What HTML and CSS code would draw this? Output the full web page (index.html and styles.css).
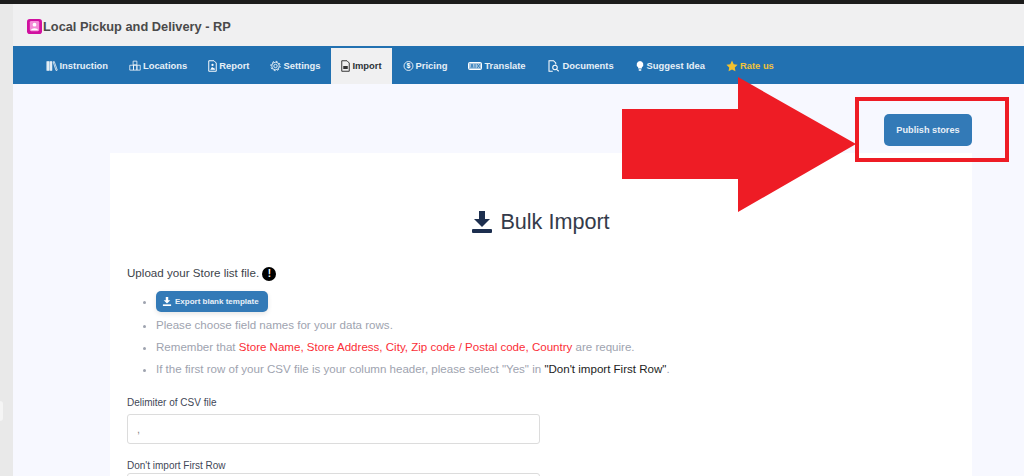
FILE: index.html
```html
<!DOCTYPE html>
<html lang="en">
<head>
    <meta charset="UTF-8">
    <meta name="viewport" content="width=device-width, initial-scale=1.0">
    <title>Local Pickup and Delivery - RP</title>
    <link rel="stylesheet" href="styles.css">
</head>
<body>
    <div class="topbar"></div>
    <div class="wrap">
        <div class="sidebar"><div class="sidebar-tab"></div></div>
        <div class="page">
            <div class="app-title">
                <svg class="app-logo" viewBox="0 0 16 16"><rect width="16" height="16" rx="3" fill="#d0109f"/><rect x="3" y="2" width="10" height="11" rx="1.5" fill="#f48ad8"/><circle cx="8" cy="6" r="2" fill="#fff"/><path d="M4 12c1-3 7-3 8 0z" fill="#fff"/></svg>
                <span>Local Pickup and Delivery - RP</span>
            </div>

            <nav class="nav">
                <a class="nav-item" href="#">
                    <svg class="ico ico-12" viewBox="0 0 16 16"><path d="M1 2h3v12H1zM5 2h3v12H5z" fill="#fff" fill-opacity=".85" stroke="#fff" stroke-width=".6"/><path d="M9.500 2.500l1.500-.5 4 11.500-1.600.6z" fill="none" stroke="#fff"/></svg>Instruction</a>
                <a class="nav-item" href="#">
                    <svg class="ico ico-12" viewBox="0 0 16 16"><path d="M5.500 1.500h5v5h-5zM1 7h5v6.500H1zM6 7h4.500v6.500H6zM10.500 7H15v6.500h-4.500z" fill="none" stroke="#fff"/></svg>Locations</a>
                <a class="nav-item" href="#">
                    <svg class="ico ico-9" viewBox="0 0 12 16"><path d="M1 1h7l3 3v11H1z" fill="none" stroke="#fff" stroke-width="1.300"/><circle cx="6" cy="6.500" r="1.500" fill="#fff"/><path d="M3 13l2.500-4 1.500 2 1-1 1.500 3z" fill="#fff"/></svg>Report</a>
                <a class="nav-item" href="#">
                    <svg class="ico ico-11" viewBox="0 0 16 16"><circle cx="8" cy="8" r="2.500" fill="none" stroke="#fff" stroke-width="1.200"/><circle cx="8" cy="8" r="5.500" fill="none" stroke="#fff" stroke-width="1.200"/><circle cx="8" cy="8" r="6.800" fill="none" stroke="#fff" stroke-width="1.400" stroke-dasharray="2.400 2.900"/></svg>Settings</a>
                <a class="nav-item active" href="#">
                    <svg class="ico ico-9" viewBox="0 0 12 16"><path d="M1 1h7l3 3v11H1z" fill="none" stroke="#333" stroke-width="1.300"/><path d="M3 8h6v4H3z" fill="#333"/></svg>Import</a>
                <a class="nav-item" href="#">
                    <svg class="ico ico-11" viewBox="0 0 16 16"><circle cx="8" cy="8" r="6.500" fill="none" stroke="#fff" stroke-width="1.200"/><text class="ico-text" x="8" y="11.500" text-anchor="middle">$</text></svg>Pricing</a>
                <a class="nav-item" href="#">
                    <svg class="ico ico-14" viewBox="0 0 14 8"><rect x=".5" y=".5" width="13" height="7" rx="1" fill="#fff" fill-opacity=".6" stroke="#fff"/><path d="M3 6l1-4 1 4M7 2v4M9 2l3 4M12 2L9 6" fill="none" stroke="#1f72b5" stroke-width=".8"/></svg>Translate</a>
                <a class="nav-item nav-docs" href="#">
                    <svg class="ico ico-13" viewBox="0 0 16 16"><path d="M7 15H2V1h6l3 3v2" fill="none" stroke="#fff" stroke-width="1.400"/><circle cx="10" cy="10" r="3" fill="none" stroke="#fff" stroke-width="1.400"/><path d="M12 12.500l3 2.500" stroke="#fff" stroke-width="1.400"/></svg>Documents</a>
                <a class="nav-item" href="#">
                    <svg class="ico ico-10" viewBox="0 0 16 16"><path d="M8 0a5.500 5.500 0 0 0-3 10v2h6v-2a5.500 5.500 0 0 0-3-10zM6 13h4v2.500H6z" fill="#fff"/></svg>Suggest Idea</a>
                <a class="nav-item rate" href="#">
                    <svg class="ico ico-12" viewBox="0 0 16 16"><path d="M8 .8l2.300 4.800 5.200.7-3.800 3.600.9 5.200L8 12.600l-4.600 2.500.9-5.200L.5 6.300l5.200-.7z" fill="#f2c12e"/></svg>Rate us</a>
            </nav>

            <main class="content">
                <div class="actions">
                    <button class="btn btn-publish">Publish stores</button>
                </div>

                <section class="card">
                    <h1 class="card-title">
                        <svg class="title-ico" viewBox="0 0 20 22"><path d="M7 0h6v8h5l-8 8-8-8h5z" fill="#1d2f4f"/><rect y="18" width="20" height="4" rx="1" fill="#1d2f4f"/></svg>
                        Bulk Import
                    </h1>

                    <p class="lead">Upload your Store list file. <span class="info-dot">!</span></p>
                    <ul class="steps">
                        <li class="step-btn"><button class="btn btn-export"><svg class="export-ico" viewBox="0 0 20 22"><path d="M7 0h6v8h5l-8 8-8-8h5z" fill="#fff"/><rect y="18" width="20" height="4" fill="#fff"/></svg>Export blank template</button></li>
                        <li>Please choose field names for your data rows.</li>
                        <li>Remember that <span class="req">Store Name, Store Address, City, Zip code / Postal code, Country</span> are require.</li>
                        <li>If the first row of your CSV file is your column header, please select "Yes" in <span class="dark">"Don't import First Row"</span>.</li>
                    </ul>

                    <label class="field-label" for="delimiter">Delimiter of CSV file</label>
                    <input class="field" id="delimiter" type="text" value=",">

                    <label class="field-label field-label-tight" for="first-row">Don't import First Row</label>
                    <input class="field" id="first-row" type="text">
                </section>
            </main>
        </div>
    </div>

    <!-- annotation drawn over the screenshot -->
    <svg class="arrow" viewBox="0 0 234 136"><path d="M0 32h116V0l118 67-118 68V102H0z" fill="#ee1c25"/></svg>
    <div class="red-box"></div>
</body>
</html>
```

FILE: styles.css
```css
* {
    box-sizing: border-box;
}

html, body {
    height: 100%;
}

body {
    margin: 0;
    font-family: "Liberation Sans", Arial, sans-serif;
    background: #f0f0f1;
    color: #3c434a;
    overflow: hidden;
}

.topbar {
    height: 4px;
    background: #1c1c1c;
}

.wrap {
    display: flex;
    height: 472px;
    overflow: hidden;
}

.sidebar {
    width: 13px;
    background: #e9e9e9;
    padding-top: 397px;
}

.sidebar-tab {
    width: 3px;
    height: 20px;
    background: #f5f5f5;
    border-radius: 0 3px 3px 0;
}

.page {
    flex: 1;
    min-width: 0;
    display: flex;
    flex-direction: column;
}

.app-title {
    height: 42px;
    display: flex;
    align-items: center;
    gap: 1px;
    padding: 3px 0 0 14px;
    font-size: 12.800px;
    font-weight: bold;
    color: #4a4a4a;
}

.app-logo {
    width: 15px;
    height: 15px;
}

.nav {
    height: 38px;
    background: #2271b1;
    display: flex;
    align-items: center;
    padding-left: 22px;
}

.nav-item {
    height: 36px;
    margin-top: 1px;
    padding: 0 10.500px;
    display: flex;
    align-items: center;
    gap: 2px;
    font-size: 9.400px;
    font-weight: bold;
    color: #e6eff7;
    text-decoration: none;
}

.nav-item.active {
    background: #f0f0f1;
    color: #2c3338;
}

.nav-item.rate {
    color: #f0c33c;
}

.nav-docs {
    gap: 3px;
}

.ico {
    height: 12px;
}

.ico-9 {
    width: 9px;
}

.ico-10 {
    width: 10px;
}

.ico-11 {
    width: 11px;
}

.ico-12 {
    width: 12px;
}

.ico-13 {
    width: 13px;
}

.ico-14 {
    width: 14px;
    height: 8px;
}

.ico-text {
    font-size: 10px;
    font-weight: bold;
    fill: #fff;
}

.content {
    flex: 1;
    background: #f7f8ff;
    min-height: 0;
}

.actions {
    height: 69px;
    display: flex;
    justify-content: flex-end;
    padding: 30px 52px 0 0;
}

.btn {
    border: none;
    background: #337ab7;
    color: #e8f0f7;
    font-family: inherit;
    font-weight: bold;
    border-radius: 5px;
}

.btn-publish {
    width: 88px;
    height: 32px;
    font-size: 9.200px;
}

.card {
    width: 862px;
    height: 400px;
    margin-left: 97px;
    background: #fff;
    padding: 52px 17px 0;
}

.card-title {
    margin: 0 0 26px;
    display: flex;
    justify-content: center;
    align-items: center;
    gap: 8px;
    font-size: 21.600px;
    font-weight: normal;
    line-height: 34px;
    color: #343b4a;
}

.title-ico {
    width: 20px;
    height: 22px;
}

.lead {
    margin: 0 0 10px;
    font-size: 11.600px;
    line-height: 16px;
    color: #3c434a;
}

.info-dot {
    display: inline-block;
    width: 14px;
    height: 14px;
    border-radius: 50%;
    background: #000;
    color: #fff;
    font-size: 10px;
    font-weight: bold;
    line-height: 14px;
    text-align: center;
}

.steps {
    margin: 0 0 17px;
    padding-left: 29px;
    font-size: 11.550px;
    color: #9ea3af;
}

.steps li {
    line-height: 22px;
}

.steps .step-btn {
    line-height: 20px;
    height: 23px;
}

.btn-export {
    height: 21px;
    padding: 0 9px 0 6px;
    font-size: 8px;
    box-shadow: 0 2px 5px rgba(0, 0, 0, 0.1);
    display: inline-flex;
    align-items: center;
    gap: 3px;
    vertical-align: top;
}

.export-ico {
    width: 10px;
    height: 9px;
}

.req {
    color: #fb2d36;
}

.dark {
    color: #222;
}

.field-label {
    display: block;
    font-size: 10px;
    line-height: 12px;
    color: #3f4757;
    margin-bottom: 5px;
}

.field-label-tight {
    margin-bottom: 1px;
}

.field {
    display: block;
    width: 413px;
    height: 30px;
    margin-bottom: 16px;
    padding: 0 9px;
    border: 1px solid #dcdcdc;
    border-radius: 3px;
    font-family: inherit;
    font-size: 11px;
    color: #888;
    background: #fff;
}

.arrow {
    position: absolute;
    left: 622px;
    top: 77px;
    width: 234px;
    height: 136px;
}

.red-box {
    position: absolute;
    left: 855px;
    top: 97px;
    width: 154px;
    height: 65px;
    border: 4px solid #ee1c25;
}
```
